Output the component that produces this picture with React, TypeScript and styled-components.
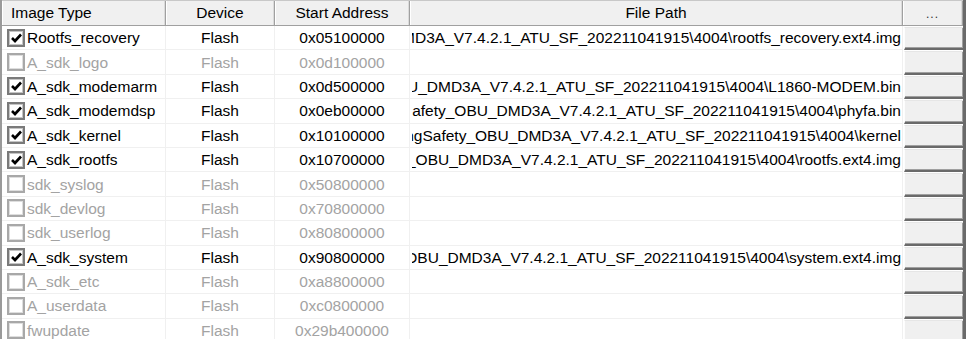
import React from "react";
import styled, { createGlobalStyle } from "styled-components";

const GlobalStyle = createGlobalStyle`
  html, body {
    margin: 0;
    padding: 0;
    background: #ffffff;
    overflow: hidden;
  }
  body {
    font-family: "Liberation Sans", Arial, sans-serif;
    font-size: 15.5px;
    color: #000;
  }
`;

const COLS = "164px 109px 135px 493px 60px";

const Table = styled.div`
  width: 966px;
  box-sizing: border-box;
  border-left: 2px solid #9a9a9a;
  border-right: 3px solid #6a6a6a;
  display: flex;
  flex-direction: column;
  height: 339px;
  overflow: hidden;
`;

const HeaderRow = styled.div`
  display: grid;
  grid-template-columns: ${COLS};
  height: 26px;
  box-sizing: border-box;
  border-top: 1px solid #c8c8c8;
  border-bottom: 1px solid #a0a0a0;
  background: #f0f0f0;
  flex: none;
`;

const HeaderCell = styled.div<{ $align?: "left" | "center" }>`
  display: flex;
  align-items: center;
  justify-content: ${(p) => (p.$align === "left" ? "flex-start" : "center")};
  padding-left: ${(p) => (p.$align === "left" ? "9px" : "0")};
  padding-bottom: 1px;
  box-sizing: border-box;
  border-right: 1px solid #a0a0a0;
  box-shadow: inset 1px 0 0 #ffffff, inset -1px 0 0 #dadada;
  white-space: nowrap;
  overflow: hidden;
`;

const Dots = styled.span`
  font-size: 12px;
  letter-spacing: 1px;
  color: #333;
  padding-top: 3px;
`;

const Row = styled.div`
  display: grid;
  grid-template-columns: ${COLS};
  height: 24.4px;
  box-sizing: border-box;
  flex: none;
`;

const Cell = styled.div<{ $align?: "left" | "center" | "right"; $disabled?: boolean }>`
  display: flex;
  align-items: center;
  justify-content: ${(p) =>
    p.$align === "center" ? "center" : p.$align === "right" ? "flex-end" : "flex-start"};
  box-sizing: border-box;
  padding-top: 1px;
  border-right: 1px solid #f0f0f0;
  border-bottom: 1px solid #f0f0f0;
  color: ${(p) => (p.$disabled ? "#a3a3a3" : "#000")};
  white-space: nowrap;
  overflow: hidden;
  min-width: 0;
`;

const NameCell = styled(Cell)`
  padding-left: 5px;
  gap: 2px;
`;

const Box = styled.span<{ $disabled?: boolean }>`
  display: flex;
  align-items: center;
  justify-content: center;
  width: 18px;
  height: 18px;
  min-width: 18px;
  box-sizing: border-box;
  margin-top: -1px;
  border: 2px solid ${(p) => (p.$disabled ? "#a8a8a8" : "#7a7a7a")};
  box-shadow: inset 0 0 0 1px ${(p) => (p.$disabled ? "#dedede" : "#c4c4c4")};
  background: #ffffff;
  flex: none;
`;

const PathClip = styled.div`
  display: flex;
  justify-content: flex-end;
  overflow: hidden;
  margin-left: 2px;
  margin-right: 1px;
  flex: 1;
  min-width: 0;
`;

const PathText = styled.span`
  flex: none;
  white-space: nowrap;
`;

const ButtonCell = styled.div`
  display: flex;
  box-sizing: border-box;
  padding-top: 1px;
  padding-left: 1px;
`;

const RowButton = styled.div`
  flex: 1;
  background: #f0f0f0;
  box-sizing: border-box;
  border-top: 1px solid #e6e6e6;
  border-left: 1px solid #fdfdfd;
  border-bottom: 2px solid #6a6a6a;
  box-shadow: inset -1px -1px 0 #a0a0a0;
`;

type Item = {
  name: string;
  checked: boolean;
  address: string;
  file?: string;
};

const PREFIX = "D:\\Release\\DrivingSafety_OBU_DMD3A_V7.4.2.1_ATU_SF_202211041915\\4004\\";

const items: Item[] = [
  { name: "Rootfs_recovery", checked: true, address: "0x05100000", file: "rootfs_recovery.ext4.img" },
  { name: "A_sdk_logo", checked: false, address: "0x0d100000" },
  { name: "A_sdk_modemarm", checked: true, address: "0x0d500000", file: "L1860-MODEM.bin" },
  { name: "A_sdk_modemdsp", checked: true, address: "0x0eb00000", file: "phyfa.bin" },
  { name: "A_sdk_kernel", checked: true, address: "0x10100000", file: "kernel" },
  { name: "A_sdk_rootfs", checked: true, address: "0x10700000", file: "rootfs.ext4.img" },
  { name: "sdk_syslog", checked: false, address: "0x50800000" },
  { name: "sdk_devlog", checked: false, address: "0x70800000" },
  { name: "sdk_userlog", checked: false, address: "0x80800000" },
  { name: "A_sdk_system", checked: true, address: "0x90800000", file: "system.ext4.img" },
  { name: "A_sdk_etc", checked: false, address: "0xa8800000" },
  { name: "A_userdata", checked: false, address: "0xc0800000" },
  { name: "fwupdate", checked: false, address: "0x29b400000" },
];

const Check = () => (
  <svg width="11" height="10" viewBox="0 0 11 10">
    <polyline points="1,5 4,8 10,1.5" fill="none" stroke="#000" strokeWidth="2.6" />
  </svg>
);

export default function App() {
  return (
    <>
      <GlobalStyle />
      <Table>
        <HeaderRow>
          <HeaderCell $align="left">Image Type</HeaderCell>
          <HeaderCell>Device</HeaderCell>
          <HeaderCell>Start Address</HeaderCell>
          <HeaderCell>File Path</HeaderCell>
          <HeaderCell>
            <Dots>...</Dots>
          </HeaderCell>
        </HeaderRow>
        {items.map((it) => {
          const dis = !it.checked;
          return (
            <Row key={it.name}>
              <NameCell $disabled={dis}>
                <Box $disabled={dis}>{it.checked && <Check />}</Box>
                {it.name}
              </NameCell>
              <Cell $align="center" $disabled={dis}>
                Flash
              </Cell>
              <Cell $align="center" $disabled={dis}>
                {it.address}
              </Cell>
              <Cell $disabled={dis}>
                {it.file && (
                  <PathClip>
                    <PathText>{PREFIX + it.file}</PathText>
                  </PathClip>
                )}
              </Cell>
              <ButtonCell>
                <RowButton />
              </ButtonCell>
            </Row>
          );
        })}
      </Table>
    </>
  );
}
